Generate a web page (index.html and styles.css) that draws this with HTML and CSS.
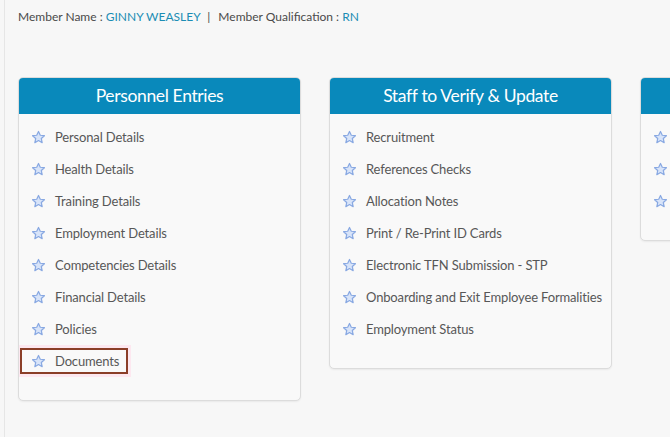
FILE: index.html
```html
<!DOCTYPE html>
<html>
<head>
<meta charset="utf-8">
<link rel="stylesheet" href="styles.css">
</head>
<body>
<div class="page">
  <div class="member">
    <span class="label">Member Name : </span><span class="value">GINNY WEASLEY</span>
    <span class="sep">|</span>
    <span class="label">Member Qualification : </span><span class="value">RN</span>
  </div>
  <div class="cards">
    <div class="card">
      <div class="card-head">Personnel Entries</div>
      <ul class="list">
        <li class="item"><svg class="star" viewBox="0 0 16 16"><path d="M8 1.6l1.9 4 4.4.5-3.3 3 .9 4.4L8 11.3l-3.9 2.2.9-4.4-3.3-3 4.4-.5z"/></svg>Personal Details</li>
        <li class="item"><svg class="star" viewBox="0 0 16 16"><path d="M8 1.6l1.9 4 4.4.5-3.3 3 .9 4.4L8 11.3l-3.9 2.2.9-4.4-3.3-3 4.4-.5z"/></svg>Health Details</li>
        <li class="item"><svg class="star" viewBox="0 0 16 16"><path d="M8 1.6l1.9 4 4.4.5-3.3 3 .9 4.4L8 11.3l-3.9 2.2.9-4.4-3.3-3 4.4-.5z"/></svg>Training Details</li>
        <li class="item"><svg class="star" viewBox="0 0 16 16"><path d="M8 1.6l1.9 4 4.4.5-3.3 3 .9 4.4L8 11.3l-3.9 2.2.9-4.4-3.3-3 4.4-.5z"/></svg>Employment Details</li>
        <li class="item"><svg class="star" viewBox="0 0 16 16"><path d="M8 1.6l1.9 4 4.4.5-3.3 3 .9 4.4L8 11.3l-3.9 2.2.9-4.4-3.3-3 4.4-.5z"/></svg>Competencies Details</li>
        <li class="item"><svg class="star" viewBox="0 0 16 16"><path d="M8 1.6l1.9 4 4.4.5-3.3 3 .9 4.4L8 11.3l-3.9 2.2.9-4.4-3.3-3 4.4-.5z"/></svg>Financial Details</li>
        <li class="item"><svg class="star" viewBox="0 0 16 16"><path d="M8 1.6l1.9 4 4.4.5-3.3 3 .9 4.4L8 11.3l-3.9 2.2.9-4.4-3.3-3 4.4-.5z"/></svg>Policies</li>
        <li class="item"><span class="highlight"><svg class="star" viewBox="0 0 16 16"><path d="M8 1.6l1.9 4 4.4.5-3.3 3 .9 4.4L8 11.3l-3.9 2.2.9-4.4-3.3-3 4.4-.5z"/></svg>Documents</span></li>
      </ul>
    </div>
    <div class="card">
      <div class="card-head">Staff to Verify &amp; Update</div>
      <ul class="list">
        <li class="item"><svg class="star" viewBox="0 0 16 16"><path d="M8 1.6l1.9 4 4.4.5-3.3 3 .9 4.4L8 11.3l-3.9 2.2.9-4.4-3.3-3 4.4-.5z"/></svg>Recruitment</li>
        <li class="item"><svg class="star" viewBox="0 0 16 16"><path d="M8 1.6l1.9 4 4.4.5-3.3 3 .9 4.4L8 11.3l-3.9 2.2.9-4.4-3.3-3 4.4-.5z"/></svg>References Checks</li>
        <li class="item"><svg class="star" viewBox="0 0 16 16"><path d="M8 1.6l1.9 4 4.4.5-3.3 3 .9 4.4L8 11.3l-3.9 2.2.9-4.4-3.3-3 4.4-.5z"/></svg>Allocation Notes</li>
        <li class="item"><svg class="star" viewBox="0 0 16 16"><path d="M8 1.6l1.9 4 4.4.5-3.3 3 .9 4.4L8 11.3l-3.9 2.2.9-4.4-3.3-3 4.4-.5z"/></svg>Print / Re-Print ID Cards</li>
        <li class="item"><svg class="star" viewBox="0 0 16 16"><path d="M8 1.6l1.9 4 4.4.5-3.3 3 .9 4.4L8 11.3l-3.9 2.2.9-4.4-3.3-3 4.4-.5z"/></svg>Electronic TFN Submission - STP</li>
        <li class="item"><svg class="star" viewBox="0 0 16 16"><path d="M8 1.6l1.9 4 4.4.5-3.3 3 .9 4.4L8 11.3l-3.9 2.2.9-4.4-3.3-3 4.4-.5z"/></svg>Onboarding and Exit Employee Formalities</li>
        <li class="item"><svg class="star" viewBox="0 0 16 16"><path d="M8 1.6l1.9 4 4.4.5-3.3 3 .9 4.4L8 11.3l-3.9 2.2.9-4.4-3.3-3 4.4-.5z"/></svg>Employment Status</li>
      </ul>
    </div>
    <div class="card card-partial">
      <div class="card-head"></div>
      <ul class="list">
        <li class="item"><svg class="star" viewBox="0 0 16 16"><path d="M8 1.6l1.9 4 4.4.5-3.3 3 .9 4.4L8 11.3l-3.9 2.2.9-4.4-3.3-3 4.4-.5z"/></svg></li>
        <li class="item"><svg class="star" viewBox="0 0 16 16"><path d="M8 1.6l1.9 4 4.4.5-3.3 3 .9 4.4L8 11.3l-3.9 2.2.9-4.4-3.3-3 4.4-.5z"/></svg></li>
        <li class="item"><svg class="star" viewBox="0 0 16 16"><path d="M8 1.6l1.9 4 4.4.5-3.3 3 .9 4.4L8 11.3l-3.9 2.2.9-4.4-3.3-3 4.4-.5z"/></svg></li>
      </ul>
    </div>
  </div>
</div>
</body>
</html>
```

FILE: styles.css
```css
html, body {
  margin: 0;
  padding: 0;
  background: #f7f7f7;
  overflow: hidden;
}
body {
  font-family: "Lato", "Open Sans", sans-serif;
  color: #555;
}
.page {
  margin-left: 4px;
  border-left: 1px solid #e6e6e6;
  min-height: 437px;
  padding: 9px 0 0 13px;
  box-sizing: border-box;
  width: 700px;
}
.member {
  font-size: 12px;
  line-height: 16px;
  color: #4a4a4a;
}
.member .value {
  color: #1b8db4;
}
.member .sep {
  margin: 0 5px 0 4px;
}
.cards {
  display: grid;
  grid-template-columns: 283px 283px 283px;
  column-gap: 28px;
  align-items: start;
  margin-top: 52px;
}
.card {
  background: #f9f9f9;
  border: 1px solid #dcdcdc;
  border-radius: 5px;
  box-shadow: 0 1px 2px rgba(0,0,0,0.06);
  overflow: hidden;
}
.card-head {
  background: #0989bb;
  color: #fff;
  text-align: center;
  height: 37px;
  line-height: 37px;
  font-size: 17.5px;
  letter-spacing: -0.35px;
  margin: -1px -1px 0 -1px;
}
.list {
  list-style: none;
  margin: 0;
  padding: 7px 0 23px 0;
}
.item {
  height: 32px;
  display: flex;
  align-items: center;
  padding-left: 12px;
  font-size: 13px;
  color: #575757;
  white-space: nowrap;
  letter-spacing: -0.15px;
}
.star {
  width: 15px;
  height: 15px;
  margin-right: 9px;
  flex: none;
}
.star path {
  fill: #d8e4f9;
  stroke: #88a8e2;
  stroke-width: 1.3;
  stroke-linejoin: round;
}
.highlight {
  display: inline-flex;
  align-items: center;
  margin-left: -11px;
  padding: 0 7px 0 9px;
  height: 22px;
  border: 2px solid #8b3e28;
  box-shadow: 0 0 0 3px #fde8f0;
}
```
